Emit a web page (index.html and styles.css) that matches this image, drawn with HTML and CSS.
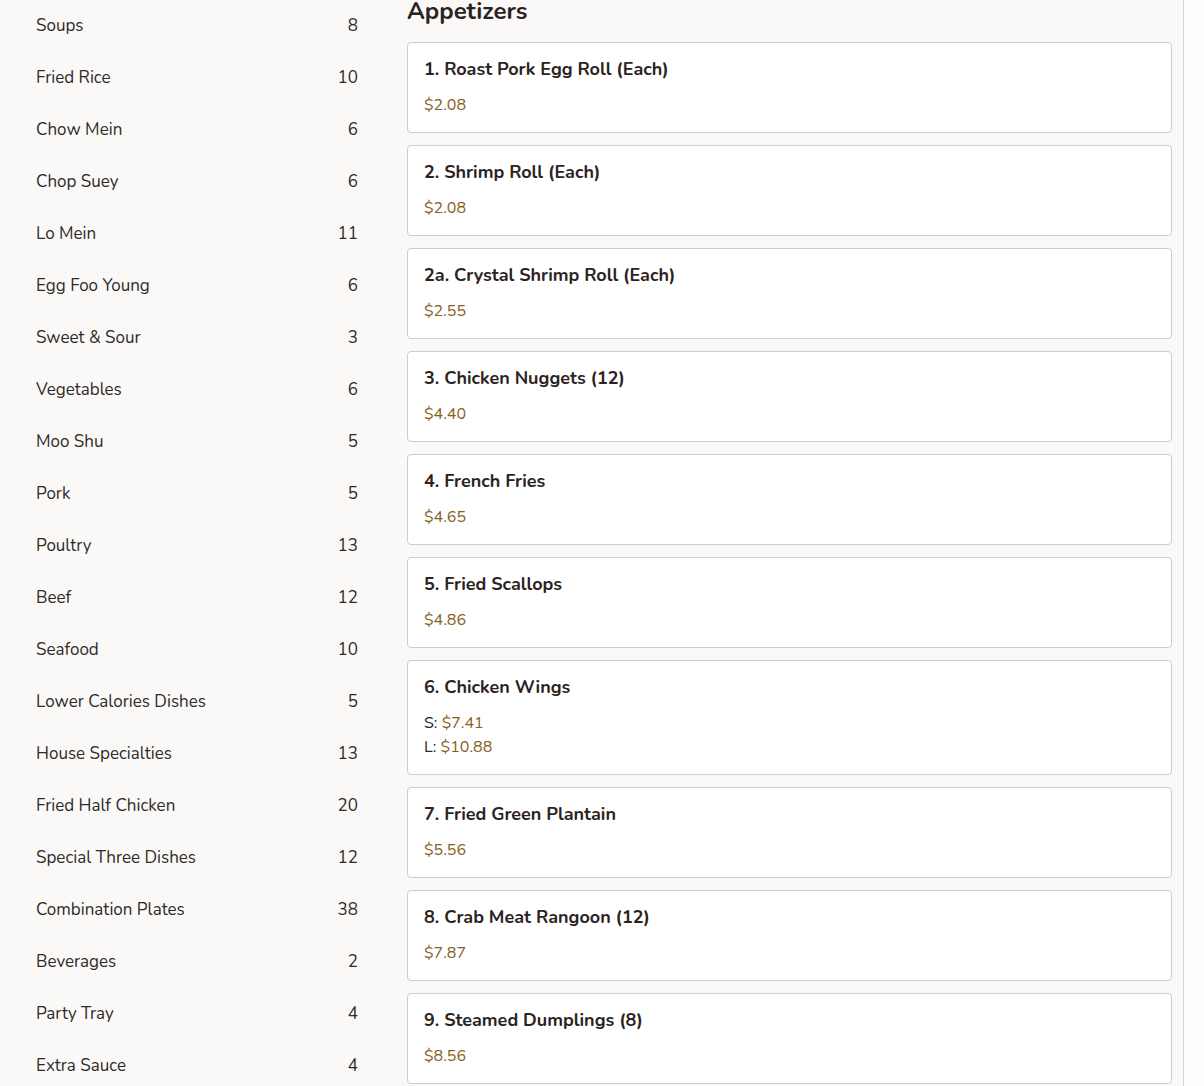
FILE: index.html
```html
<!DOCTYPE html>
<html lang="en">
<head>
<meta charset="utf-8">
<title>Menu</title>
<link rel="stylesheet" href="styles.css">
</head>
<body>
<div class="page">
  <nav class="sidebar">
    <a class="cat"><span>Soups</span><span class="count">8</span></a>
    <a class="cat"><span>Fried Rice</span><span class="count">10</span></a>
    <a class="cat"><span>Chow Mein</span><span class="count">6</span></a>
    <a class="cat"><span>Chop Suey</span><span class="count">6</span></a>
    <a class="cat"><span>Lo Mein</span><span class="count">11</span></a>
    <a class="cat"><span>Egg Foo Young</span><span class="count">6</span></a>
    <a class="cat"><span>Sweet &amp; Sour</span><span class="count">3</span></a>
    <a class="cat"><span>Vegetables</span><span class="count">6</span></a>
    <a class="cat"><span>Moo Shu</span><span class="count">5</span></a>
    <a class="cat"><span>Pork</span><span class="count">5</span></a>
    <a class="cat"><span>Poultry</span><span class="count">13</span></a>
    <a class="cat"><span>Beef</span><span class="count">12</span></a>
    <a class="cat"><span>Seafood</span><span class="count">10</span></a>
    <a class="cat"><span>Lower Calories Dishes</span><span class="count">5</span></a>
    <a class="cat"><span>House Specialties</span><span class="count">13</span></a>
    <a class="cat"><span>Fried Half Chicken</span><span class="count">20</span></a>
    <a class="cat"><span>Special Three Dishes</span><span class="count">12</span></a>
    <a class="cat"><span>Combination Plates</span><span class="count">38</span></a>
    <a class="cat"><span>Beverages</span><span class="count">2</span></a>
    <a class="cat"><span>Party Tray</span><span class="count">4</span></a>
    <a class="cat"><span>Extra Sauce</span><span class="count">4</span></a>
  </nav>
  <main class="main">
    <h2 class="section-title">Appetizers</h2>
    <div class="items">
      <div class="card"><div class="name">1. Roast Pork Egg Roll (Each)</div><div class="price">$2.08</div></div>
      <div class="card"><div class="name">2. Shrimp Roll (Each)</div><div class="price">$2.08</div></div>
      <div class="card"><div class="name">2a. Crystal Shrimp Roll (Each)</div><div class="price">$2.55</div></div>
      <div class="card"><div class="name">3. Chicken Nuggets (12)</div><div class="price">$4.40</div></div>
      <div class="card"><div class="name">4. French Fries</div><div class="price">$4.65</div></div>
      <div class="card"><div class="name">5. Fried Scallops</div><div class="price">$4.86</div></div>
      <div class="card"><div class="name">6. Chicken Wings</div><div class="price"><span class="size">S: </span>$7.41</div><div class="price"><span class="size">L: </span>$10.88</div></div>
      <div class="card"><div class="name">7. Fried Green Plantain</div><div class="price">$5.56</div></div>
      <div class="card"><div class="name">8. Crab Meat Rangoon (12)</div><div class="price">$7.87</div></div>
      <div class="card"><div class="name">9. Steamed Dumplings (8)</div><div class="price">$8.56</div></div>
    </div>
  </main>
  <div class="rail"></div>
</div>
</body>
</html>
```
FILE: styles.css
```css
html, body {
  margin: 0;
  padding: 0;
  height: 100%;
  overflow: hidden;
}
body {
  background: #faf9f7;
  color: #2b2321;
  font-family: "Nunito", "Lato", "Noto Sans", sans-serif;
}
.page {
  display: flex;
  align-items: flex-start;
}
.sidebar {
  width: 370px;
  padding-left: 12px;
  display: flex;
  flex-direction: column;
  flex-shrink: 0;
}
.cat {
  display: flex;
  justify-content: space-between;
  align-items: center;
  height: 52px;
  padding: 0 24px;
  font-size: 17px;
  color: #2e2a28;
  margin-top: -1px;
  margin-bottom: 1px;
}
.main {
  flex: 1;
  margin-left: 25px;
  margin-top: -9px;
  padding-right: 11px;
  border-right: 1px solid #d6d4d1;
  min-height: 1200px;
}
.section-title {
  margin: 0 0 11px;
  font-size: 24px;
  line-height: 40px;
  font-weight: 700;
  color: #2b2321;
}
.items {
  display: flex;
  flex-direction: column;
  gap: 12px;
}
.card {
  background: #fff;
  border: 1px solid #cfcdca;
  border-radius: 4px;
  padding: 14px 16px 15px;
}
.name {
  font-size: 18px;
  font-weight: 700;
  line-height: 24px;
  margin-bottom: 12px;
}
.price {
  font-size: 16px;
  line-height: 24px;
  color: #85601f;
}
.size {
  color: #2b2321;
}
.rail {
  width: 20px;
  align-self: stretch;
  background: #fdfdfd;
  flex-shrink: 0;
}
```
